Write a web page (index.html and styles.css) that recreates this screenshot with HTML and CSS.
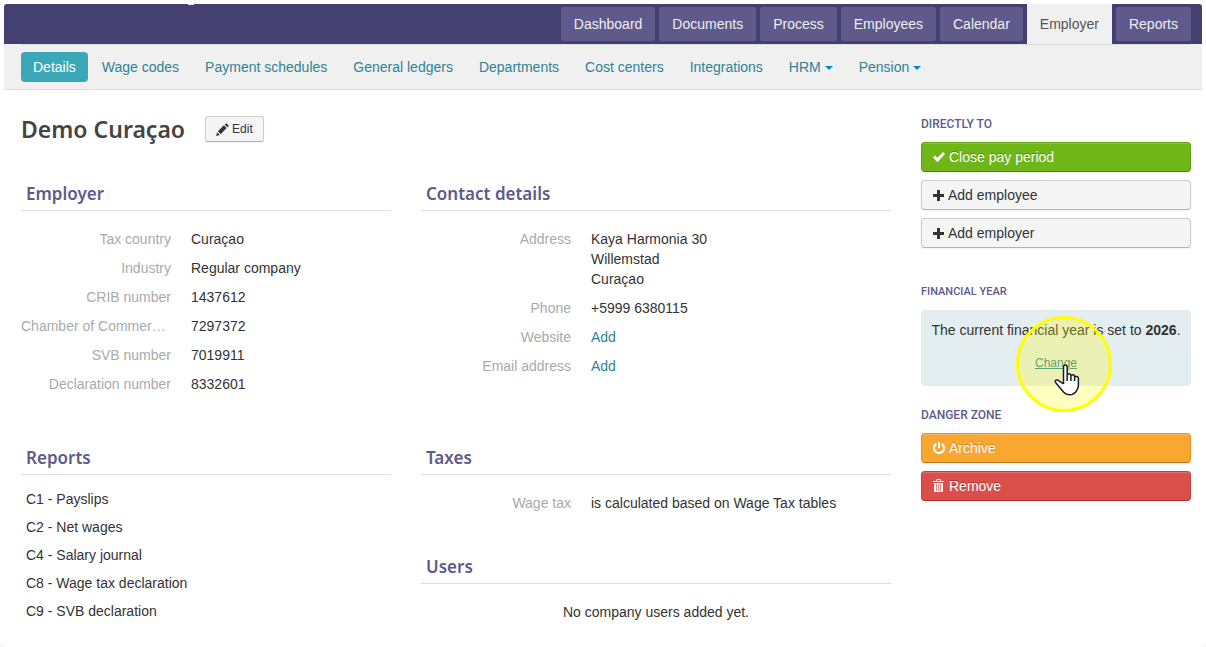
FILE: index.html
```html
<!DOCTYPE html>
<html lang="en">
  <head>
    <meta charset="UTF-8" />
    <meta name="viewport" content="width=device-width, initial-scale=1.0" />
    <title>Demo Curaçao</title>
    <link rel="stylesheet" href="styles.css">
  </head>
  <body>
    <div class="page">
      <header class="topbar">
        <nav class="tabs">
          <a href="#">Dashboard</a>
          <a href="#">Documents</a>
          <a href="#">Process</a>
          <a href="#">Employees</a>
          <a href="#">Calendar</a>
          <a href="#" class="active">Employer</a>
          <a href="#">Reports</a>
        </nav>
      </header>
      <div class="subbar">
        <nav class="pills">
          <a href="#" class="active">Details</a>
          <a href="#">Wage codes</a>
          <a href="#">Payment schedules</a>
          <a href="#">General ledgers</a>
          <a href="#">Departments</a>
          <a href="#">Cost centers</a>
          <a href="#">Integrations</a>
          <a href="#">HRM <span class="caret"></span></a>
          <a href="#">Pension <span class="caret"></span></a>
        </nav>
      </div>
      <div class="container">
        <main>
          <div class="title">
            <h1>Demo Curaçao</h1>
            <button type="button" class="btn btn-small">
              <svg class="icon" width="13" height="13" viewBox="0 0 14 14"><path d="M0 14l1.200-4 2.800 2.800zM2 9l6.500-6.500 3 3L5 12zM9.300 1.700l1-1q.7-.7 1.400 0l1.600 1.600q.7.7 0 1.400l-1 1z"/></svg>
              Edit
            </button>
          </div>
          <div class="sections">
            <section>
              <h2>Employer</h2>
              <dl>
                <dt>Tax country</dt><dd>Curaçao</dd>
                <dt>Industry</dt><dd>Regular company</dd>
                <dt>CRIB number</dt><dd>1437612</dd>
                <dt class="long">Chamber of Commer…</dt><dd>7297372</dd>
                <dt>SVB number</dt><dd>7019911</dd>
                <dt>Declaration number</dt><dd>8332601</dd>
              </dl>
            </section>
            <section>
              <h2>Contact details</h2>
              <dl>
                <dt>Address</dt><dd>Kaya Harmonia 30<br>Willemstad<br>Curaçao</dd>
                <dt>Phone</dt><dd>+5999 6380115</dd>
                <dt>Website</dt><dd><a href="#">Add</a></dd>
                <dt>Email address</dt><dd><a href="#">Add</a></dd>
              </dl>
            </section>
            <section>
              <h2>Reports</h2>
              <ul class="reports">
                <li><a href="#">C1 - Payslips</a></li>
                <li><a href="#">C2 - Net wages</a></li>
                <li><a href="#">C4 - Salary journal</a></li>
                <li><a href="#">C8 - Wage tax declaration</a></li>
                <li><a href="#">C9 - SVB declaration</a></li>
              </ul>
            </section>
            <div class="stack">
              <section>
                <h2>Taxes</h2>
                <dl>
                  <dt>Wage tax</dt><dd>is calculated based on Wage Tax tables</dd>
                </dl>
              </section>
              <section>
                <h2>Users</h2>
                <p class="empty">No company users added yet.</p>
              </section>
            </div>
          </div>
        </main>
        <aside>
          <section class="side">
            <h3>Directly to</h3>
            <button type="button" class="btn btn-success">
              <svg class="icon" width="12" height="14" viewBox="0 0 12 14"><path d="M0 7.500l2-2 2.400 2.200L10 2l2 2-7.600 8.300z"/></svg>
              Close pay period
            </button>
            <button type="button" class="btn">
              <svg class="icon" width="11" height="14" viewBox="0 0 11 14"><path d="M4 2h3v4h4v3H7v4H4V9H0V6h4z"/></svg>
              Add employee
            </button>
            <button type="button" class="btn">
              <svg class="icon" width="11" height="14" viewBox="0 0 11 14"><path d="M4 2h3v4h4v3H7v4H4V9H0V6h4z"/></svg>
              Add employer
            </button>
          </section>
          <section class="side">
            <h3 class="minor">Financial year</h3>
            <div class="notice">
              <p>The current financial year is set to <strong>2026</strong>.</p>
              <a href="#">Change</a>
              <span class="spot"></span>
              <svg class="pointer" width="26" height="32" viewBox="0 0 26 32"><path d="M9.500 20V3.200Q9.500 1 11.300 1T13.200 3.200V11.500Q13.200 9.800 15 9.800T16.900 11.600V12.200Q17.200 10.800 18.800 10.800T20.600 12.600V13.600Q21 12.200 22.600 12.400T24.400 14.200V21Q24.400 24 22.800 26.300 20 30.800 15.800 30.800 12 30.800 9.500 28L2 19Q.4 17 2 16.200T5 16.800L9.500 20M13.200 11.500V17M16.900 12.200V17M20.600 13.600V17"/></svg>
            </div>
          </section>
          <section class="side">
            <h3>Danger zone</h3>
            <button type="button" class="btn btn-warning">
              <svg class="icon" width="12" height="14" viewBox="0 0 12 14"><path d="M5 1h2v6H5z"/><path class="line" d="M3.200 2.900a5 5 0 1 0 5.600 0"/></svg>
              Archive
            </button>
            <button type="button" class="btn btn-danger">
              <svg class="icon" width="12" height="14" viewBox="0 0 12 14"><path fill-rule="evenodd" d="M0 2h3V1q0-1 1-1h3q1 0 1 1v1h3v1H0zM4 1v1h3V1zM1 4h9v8q0 1-1 1H2q-1 0-1-1z"/><path class="slots" d="M3.500 5v7M5.500 5v7M7.500 5v7"/></svg>
              Remove
            </button>
          </section>
        </aside>
      </div>
    </div>
  </body>
</html>
```
FILE: styles.css
```css
*{
    padding: 0;
    margin: 0;
    box-sizing: border-box;
}
body{
    background-color: #f7f7f7;
    color: #333;
    font: 14px/20px Arial, "Liberation Sans", sans-serif;
}
a{
    color: #2f8494;
    text-decoration: none;
}
.page{
    min-height: 100vh;
    padding: 4px;
    background-color: white;
    border-radius: 8px;
}
.topbar{
    position: relative;
    height: 40px;
    padding: 0 11px 0 17px;
    border-radius: 3px 3px 0 0;
    background-color: #454072;
}
/* lower edge of the logo */
.topbar::before{
    content: "";
    position: absolute;
    top: 0;
    left: 184px;
    width: 6px;
    height: 1px;
    background-color: #e8e8f0;
}
.tabs{
    display: flex;
    justify-content: flex-end;
    align-items: center;
    gap: 4px;
    height: 100%;
}
.tabs a{
    padding: 7px 13px;
    border-radius: 2px;
    background-color: #5f5a8b;
    color: #eee;
}
.tabs .active{
    padding: 10px 13px;
    border-radius: 0;
    background-color: #f0f0f0;
    color: #555;
}
.subbar{
    padding: 0 11px 0 17px;
    border-bottom: 1px solid #ddd;
    background-color: #f0f0f0;
}
.pills{
    display: flex;
    gap: 2px;
    padding: 7px 0;
    border-top: 1px solid #ddd;
}
.pills a{
    padding: 5px 12px;
    border-radius: 4px;
}
.pills .active{
    background-color: #3ba7b7;
    color: white;
}
.caret{
    display: inline-block;
    vertical-align: middle;
    border-top: 4px solid #0088cc;
    border-left: 4px solid transparent;
    border-right: 4px solid transparent;
}
.container{
    display: grid;
    grid-template-columns: 87fr 27fr;
    gap: 30px;
    padding: 24px 11px 0 17px;
}
.title{
    display: flex;
    align-items: center;
    gap: 20px;
    height: 30px;
    margin-bottom: 39px;
}
h1, h2{
    font-family: "Trebuchet MS", "Noto Sans", sans-serif;
    font-weight: 600;
}
h1{
    font-size: 23px;
    line-height: 30px;
    color: #444;
}
h2{
    padding: 0 5px 5px;
    margin-bottom: 18px;
    border-bottom: 1px solid #e0e0e0;
    font-size: 17px;
    line-height: 22px;
    color: #5f5a8b;
}
.sections{
    display: grid;
    grid-template-columns: 37fr 47fr;
    gap: 53px 30px;
}
.stack{
    display: flex;
    flex-direction: column;
    gap: 43px;
}
dl{
    display: grid;
    grid-template-columns: 150px 1fr;
    gap: 9px 20px;
}
dt{
    text-align: right;
    white-space: nowrap;
    color: #aaa;
}
.long{
    text-align: left;
}
.reports{
    margin-top: -8px;
    padding: 0 5px;
    line-height: 28px;
    list-style: none;
}
.reports a{
    color: #333;
}
.empty{
    text-align: center;
}
.side{
    display: flex;
    flex-direction: column;
    gap: 8px;
    margin-bottom: 34px;
}
.side:nth-child(2){
    margin-bottom: 19px;
}
h3{
    font: 500 12px/20px Roboto, sans-serif;
    text-transform: uppercase;
    color: #5f5a8b;
}
.minor{
    font-size: 11px;
}
.btn{
    display: flex;
    align-items: center;
    gap: 4px;
    height: 30px;
    padding: 0 11px;
    border: 1px solid #ccc;
    border-bottom-color: #b3b3b3;
    border-radius: 4px;
    background-color: #f5f5f5;
    box-shadow: inset 0 1px 0 rgba(255,255,255,.2), 0 1px 2px rgba(0,0,0,.05);
    font: inherit;
    color: #333;
    cursor: pointer;
}
.btn-small{
    gap: 3px;
    height: 26px;
    padding: 0 10px;
    border-radius: 3px;
    font-size: 12px;
}
.btn-success, .btn-warning, .btn-danger{
    color: white;
    text-shadow: 0 -1px 0 rgba(0,0,0,.25);
}
.btn-success{
    border-color: #5fa30f #5fa30f #4d8a0a;
    background-color: #6fb717;
}
.btn-warning{
    border-color: #e0952a #e0952a #bf7a1c;
    background-color: #faa732;
}
.btn-danger{
    border-color: #c2423f #c2423f #a33330;
    background-color: #da4f4a;
}
.icon{
    fill: currentColor;
}
.line{
    fill: none;
    stroke: currentColor;
    stroke-width: 2;
}
.slots{
    stroke: #e58a87;
}
.notice{
    position: relative;
    padding: 10px 10px 13px;
    border-radius: 4px;
    background-color: #e4edf0;
    text-align: center;
}
.notice p{
    margin-bottom: 13px;
    white-space: nowrap;
}
.notice a{
    display: block;
    font-size: 12px;
    text-decoration: underline;
}
/* click highlight and hand pointer */
.spot{
    position: absolute;
    top: 6px;
    left: 95px;
    width: 96px;
    height: 96px;
    border: 3px solid #ff0;
    border-radius: 50%;
    background-color: rgba(255,255,0,.25);
    pointer-events: none;
}
.pointer{
    position: absolute;
    top: 54px;
    left: 133px;
    fill: white;
    stroke: #1a1a2a;
    stroke-width: 1.5;
    stroke-linejoin: round;
    pointer-events: none;
}
```
